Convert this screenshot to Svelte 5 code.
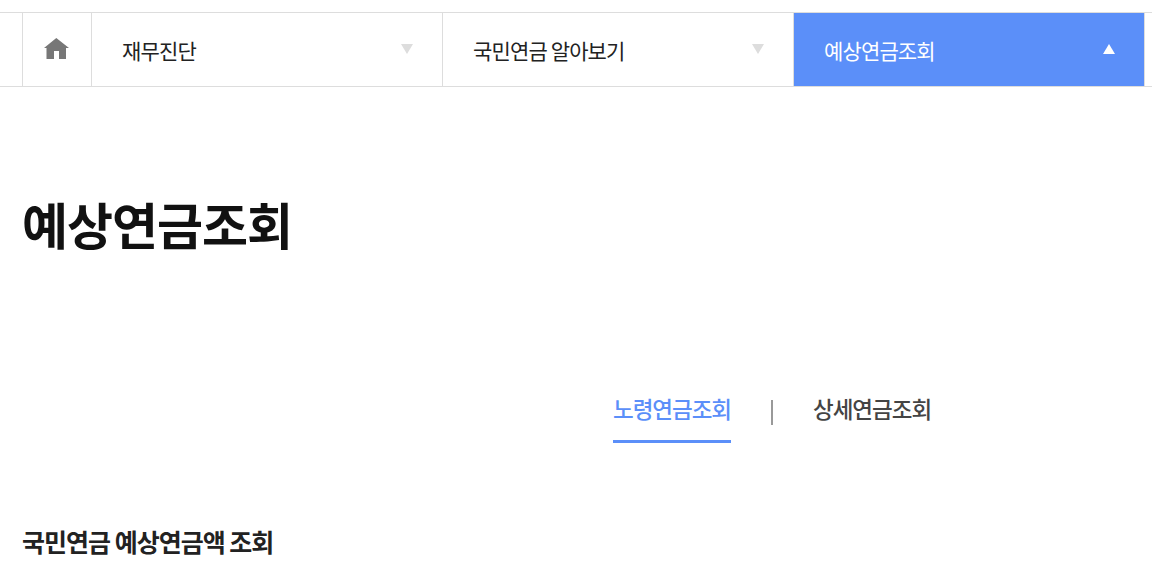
<script lang="ts">
  type Crumb = { label: string; active?: boolean };

  const crumbs: Crumb[] = [
    { label: '재무진단' },
    { label: '국민연금 알아보기' },
    { label: '예상연금조회', active: true }
  ];

  const tabs = ['노령연금조회', '상세연금조회'];
  let current = $state(0);
</script>

<nav class="location">
  <a class="home" href="#home" aria-label="홈">
    <svg width="25" height="21" viewBox="0 0 25 21">
      <path d="M12.3 0 L25 10 H22 V21 H15 V13 H10 V21 H2.5 V10 H0 Z" fill="#777" />
    </svg>
  </a>
  {#each crumbs as crumb}
    <button class="crumb" class:active={crumb.active}>
      <span>{crumb.label}</span>
      <svg width="12" height="10" viewBox="0 0 12 10">
        <path d={crumb.active ? 'M6 0 L12 10 H0 Z' : 'M0 0 H12 L6 10 Z'} fill="currentColor" />
      </svg>
    </button>
  {/each}
</nav>

<main>
  <h1>예상연금조회</h1>
  <div class="tabs">
    {#each tabs as tab, i}
      <button class="tab" class:selected={current === i} onclick={() => (current = i)}>{tab}</button>
    {/each}
  </div>
  <h2>국민연금 예상연금액 조회</h2>
</main>

<style>
  :global(body) {
    background: #fff;
    color: #111;
    font-family: 'Noto Sans CJK KR', sans-serif;
    overflow: hidden;
  }

  button {
    padding: 0;
    border: 0;
    background: none;
    font-family: inherit;
    cursor: pointer;
  }

  .location {
    display: flex;
    box-sizing: border-box;
    height: 75px;
    margin-top: 12px;
    padding-left: 22px;
    border-top: 1px solid #ddd;
    border-bottom: 1px solid #ddd;
  }

  .home {
    display: flex;
    align-items: center;
    justify-content: center;
    box-sizing: border-box;
    width: 70px;
    padding: 0 1px 2px 0;
    border-left: 1px solid #ddd;
    border-right: 1px solid #ddd;
  }

  .crumb {
    display: flex;
    align-items: center;
    justify-content: space-between;
    box-sizing: border-box;
    width: 351px;
    padding: 0 29px 0 30px;
    border-right: 1px solid #ddd;
    color: #222;
    font-size: 21px;
    letter-spacing: -0.86px;
  }

  .crumb svg {
    margin-bottom: 2px;
    color: #ddd;
  }

  .crumb.active,
  .crumb.active svg {
    color: #fff;
  }

  .crumb.active {
    background: #5b8ff9;
  }

  main {
    padding: 0 22px;
  }

  h1 {
    margin: 100px 0 0;
    font-size: 50px;
    line-height: 72px;
    font-weight: 700;
    letter-spacing: -1px;
  }

  .tabs {
    display: flex;
    margin: 133px 0 0 591px;
  }

  .tab {
    height: 51px;
    padding-bottom: 16px;
    border-bottom: 3px solid transparent;
    color: #444;
    font-size: 22.5px;
    line-height: 32px;
    font-weight: 500;
    letter-spacing: -1.03px;
  }

  .tab.selected {
    border-color: #5b8ff9;
    color: #5b8ff9;
  }

  .tab + .tab {
    display: flex;
  }

  .tab + .tab::before {
    content: '';
    width: 2px;
    height: 25px;
    margin: 8px 40px 0;
    background: #999;
  }

  h2 {
    margin: 81px 0 0;
    color: #222;
    font-size: 25px;
    line-height: 34px;
    font-weight: 700;
    letter-spacing: -1px;
  }
</style>
